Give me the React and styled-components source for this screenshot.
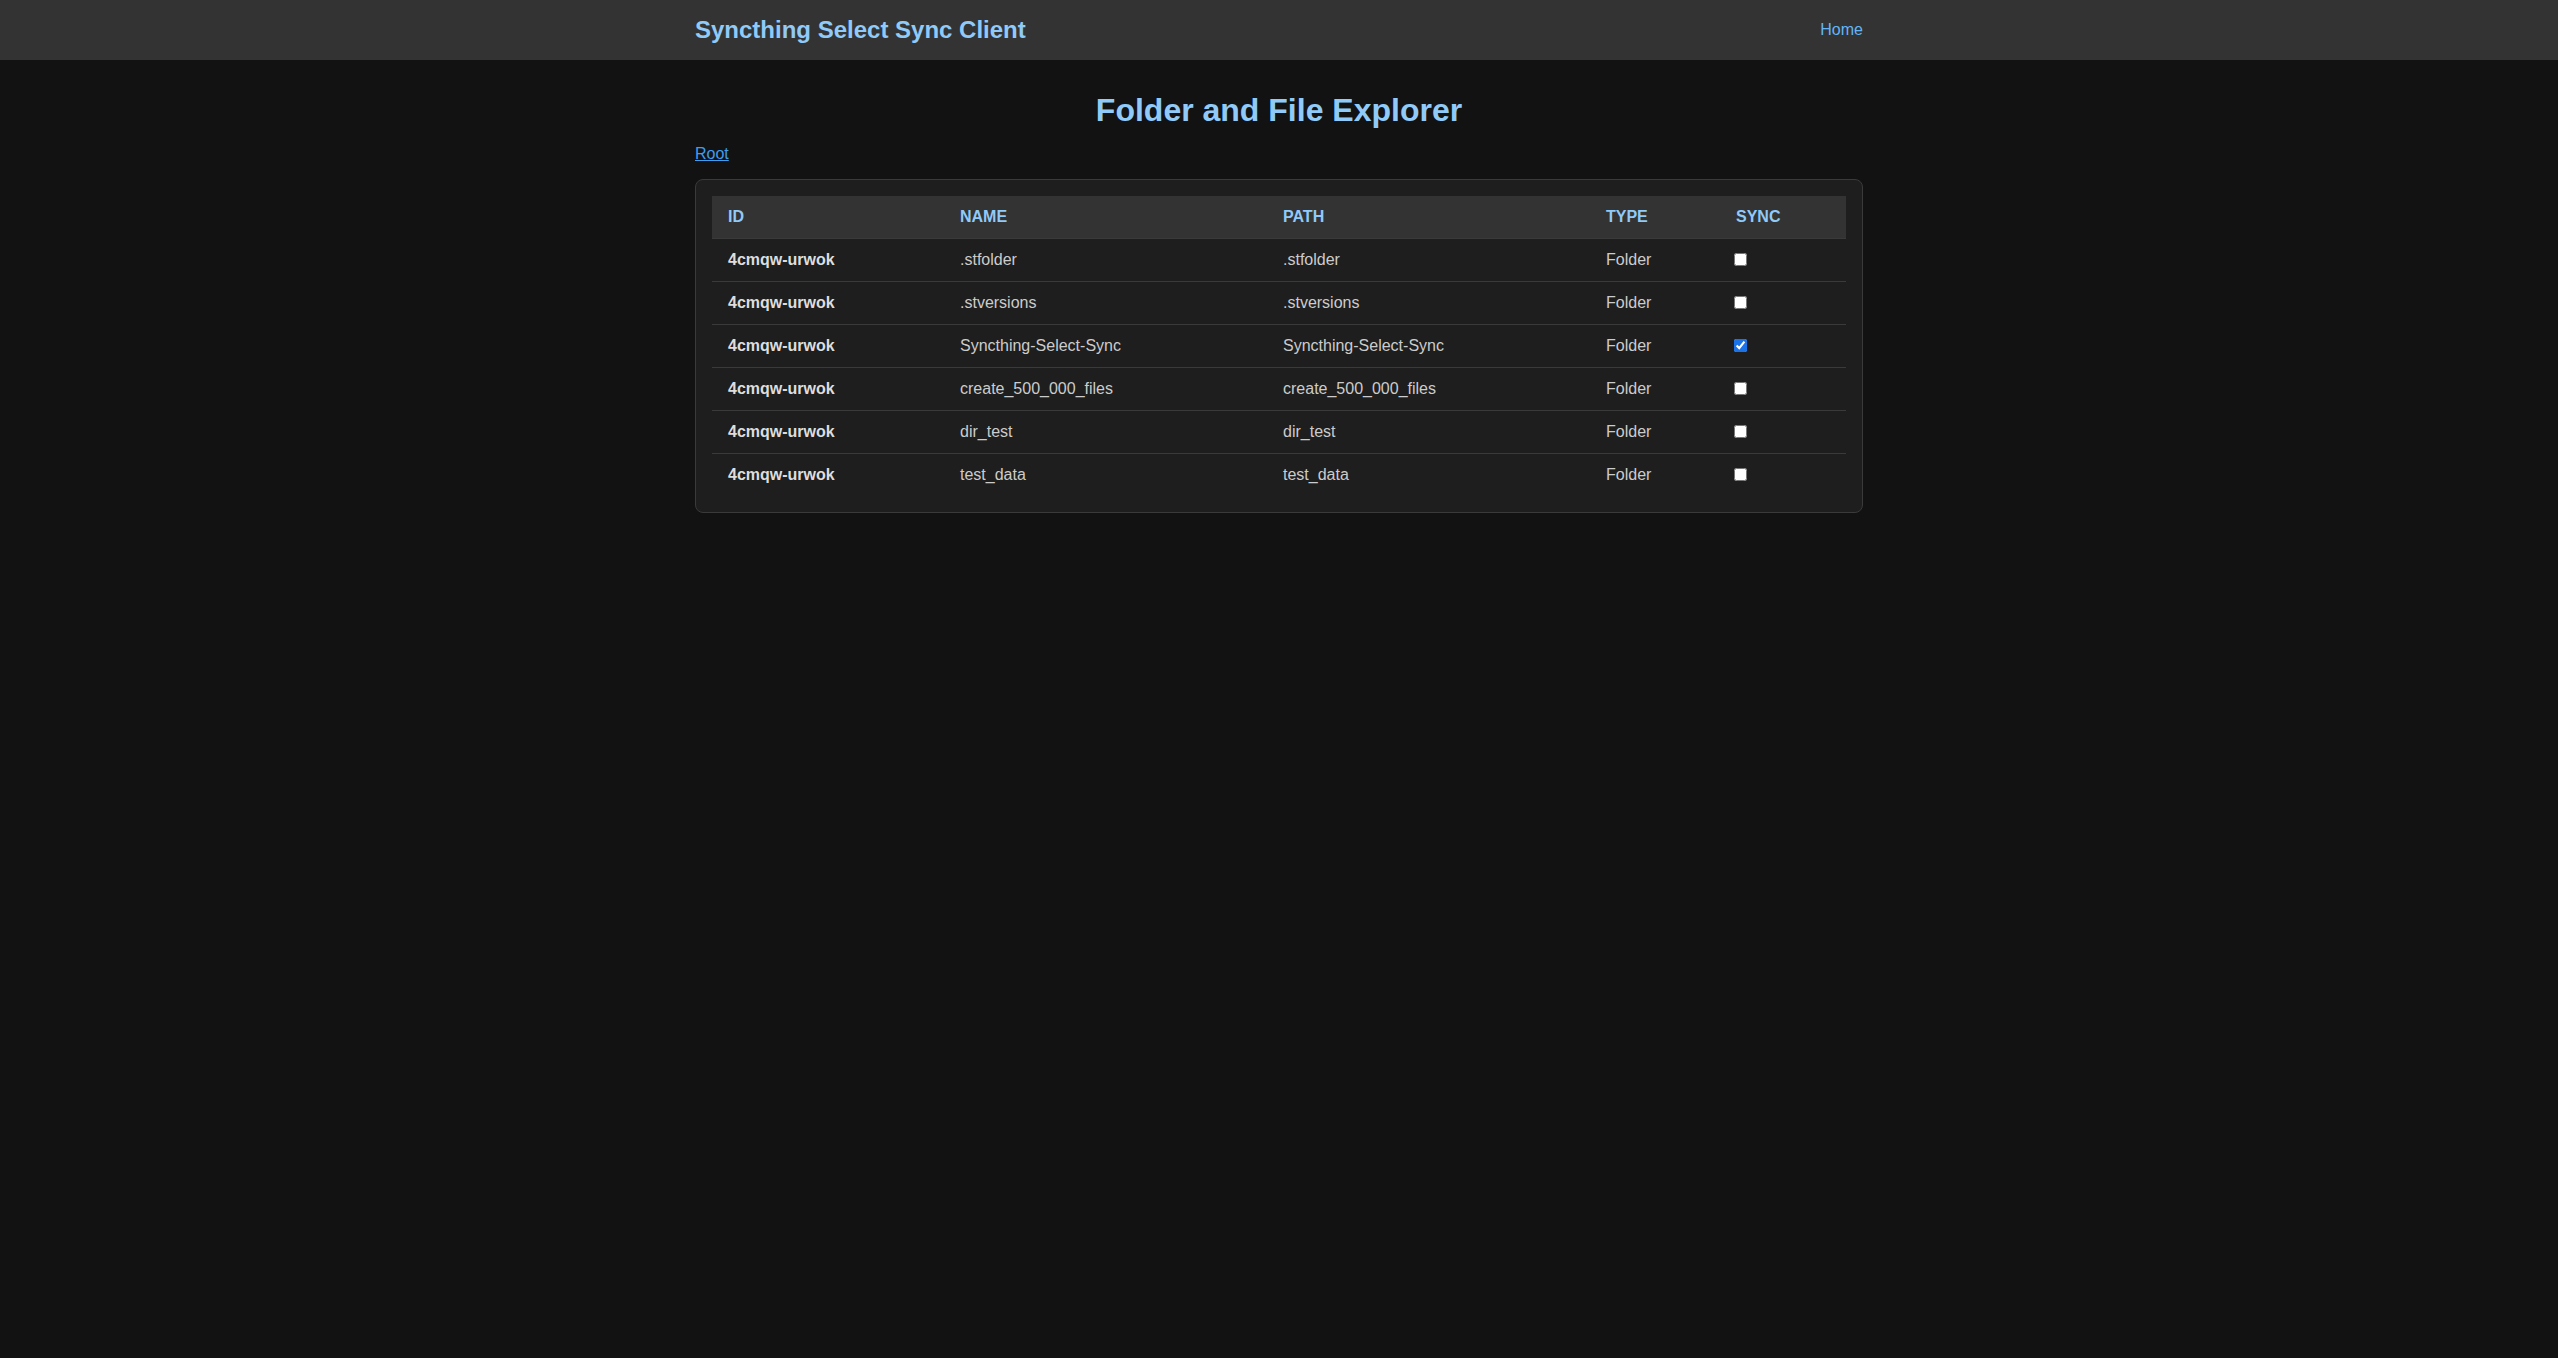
import React, { useState } from "react";
import styled, { createGlobalStyle } from "styled-components";

const GlobalStyle = createGlobalStyle`
  html, body {
    margin: 0;
    padding: 0;
    background-color: #121212;
    color: #e0e0e0;
    font-family: "Liberation Sans", Arial, sans-serif;
  }
`;

const Header = styled.header`
  background-color: #333333;
  height: 60px;
`;

const Container = styled.div`
  max-width: 1168px;
  margin: 0 auto;
`;

const HeaderInner = styled(Container)`
  height: 100%;
  display: flex;
  align-items: center;
  justify-content: space-between;
`;

const Brand = styled.div`
  font-size: 24px;
  font-weight: bold;
  color: #90caf9;
`;

const NavLink = styled.a`
  font-size: 16px;
  color: #64b5f6;
  text-decoration: none;
  cursor: pointer;
`;

const Title = styled.h1`
  font-size: 32px;
  font-weight: bold;
  color: #90caf9;
  text-align: center;
  margin: 32px 0 16px;
`;

const Breadcrumb = styled.div`
  font-size: 16px;
  margin-bottom: 16px;
`;

const CrumbLink = styled.a`
  color: #3d9df0;
  text-decoration: underline;
  cursor: pointer;
`;

const Card = styled.div`
  background-color: #1e1e1e;
  border: 1px solid #3a3a3a;
  border-radius: 8px;
  padding: 16px;
`;

const Table = styled.table`
  width: 100%;
  border-collapse: collapse;
  table-layout: fixed;
`;

const Th = styled.th`
  box-sizing: border-box;
  background-color: #333333;
  color: #90caf9;
  font-size: 16px;
  font-weight: bold;
  text-align: left;
  text-transform: uppercase;
  padding: 12px 16px;
  line-height: 18px;
  width: ${(p) => p.$w}px;
`;

const Tr = styled.tr`
  border-top: 1px solid #3a3a3a;
`;

const Td = styled.td`
  padding: 12px 16px;
  font-size: 16px;
  line-height: 18px;
  color: ${(p) => (p.$bold ? "#dddddd" : "#cccccc")};
  font-weight: ${(p) => (p.$bold ? "bold" : "normal")};
`;

const Check = styled.input`
  width: 13px;
  height: 13px;
  margin: 0 0 3px -2px;
  vertical-align: middle;
  accent-color: #1a73e8;
`;

const initialRows = [
  { name: ".stfolder", sync: false },
  { name: ".stversions", sync: false },
  { name: "Syncthing-Select-Sync", sync: true },
  { name: "create_500_000_files", sync: false },
  { name: "dir_test", sync: false },
  { name: "test_data", sync: false },
];

function App() {
  const [rows, setRows] = useState(initialRows);

  const toggle = (i) => {
    setRows(rows.map((r, idx) => (idx === i ? { ...r, sync: !r.sync } : r)));
  };

  return (
    <>
      <GlobalStyle />
      <Header>
        <HeaderInner>
          <Brand>Syncthing Select Sync Client</Brand>
          <NavLink>Home</NavLink>
        </HeaderInner>
      </Header>
      <Container>
        <Title>Folder and File Explorer</Title>
        <Breadcrumb>
          <CrumbLink>Root</CrumbLink>
        </Breadcrumb>
        <Card>
          <Table>
            <thead>
              <tr>
                <Th $w={232}>ID</Th>
                <Th $w={323}>Name</Th>
                <Th $w={323}>Path</Th>
                <Th $w={130}>Type</Th>
                <Th $w={126}>Sync</Th>
              </tr>
            </thead>
            <tbody>
              {rows.map((r, i) => (
                <Tr key={r.name}>
                  <Td $bold>4cmqw-urwok</Td>
                  <Td>{r.name}</Td>
                  <Td>{r.name}</Td>
                  <Td>Folder</Td>
                  <Td>
                    <Check type="checkbox" checked={r.sync} onChange={() => toggle(i)} />
                  </Td>
                </Tr>
              ))}
            </tbody>
          </Table>
        </Card>
      </Container>
    </>
  );
}

export default App;
